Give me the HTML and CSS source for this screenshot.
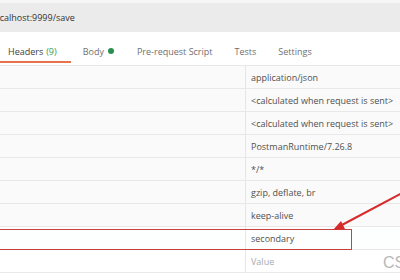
FILE: index.html
```html
<!DOCTYPE html>
<html lang="en">
<head>
<meta charset="UTF-8">
<meta name="viewport" content="width=device-width, initial-scale=1.0">
<title>Headers</title>
<link rel="stylesheet" href="styles.css">
</head>
<body>
<div class="page">
    <div class="url-bar">
        <div class="url-input"><span class="url-text">localhost:9999/save</span></div>
    </div>
    <div class="tabs">
        <div class="tab active">Headers <span class="count">(9)</span></div>
        <div class="tab body-tab">Body <span class="dot"></span></div>
        <div class="tab">Pre-request Script</div>
        <div class="tab">Tests</div>
        <div class="tab">Settings</div>
    </div>
    <div class="table">
        <div class="row auto"><div class="key"></div><div class="value">application/json</div></div>
        <div class="row auto"><div class="key"></div><div class="value">&lt;calculated when request is sent&gt;</div></div>
        <div class="row auto"><div class="key"></div><div class="value">&lt;calculated when request is sent&gt;</div></div>
        <div class="row auto"><div class="key"></div><div class="value">PostmanRuntime/7.26.8</div></div>
        <div class="row auto"><div class="key"></div><div class="value">*/*</div></div>
        <div class="row auto"><div class="key"></div><div class="value">gzip, deflate, br</div></div>
        <div class="row auto"><div class="key"></div><div class="value">keep-alive</div></div>
        <div class="row custom"><div class="key"></div><div class="value">secondary</div></div>
        <div class="row"><div class="key"></div><div class="value placeholder">Value</div></div>
    </div>

    <!-- annotations drawn over the screenshot -->
    <div class="mark-box"></div>
    <svg class="arrow" width="400" height="280" viewBox="0 0 400 280">
        <line x1="402" y1="193" x2="340" y2="226" stroke="#d62b2b" stroke-width="2"/>
        <polygon points="333,230 341,221 345,229" fill="#d62b2b"/>
    </svg>
    <div class="watermark">CSDN</div>
</div>
</body>
</html>
```

FILE: styles.css
```css
body {
    margin: 0;
    padding: 0;
    font-family: "Open Sans", Arial, sans-serif;
    font-size: 9px;
    color: #505050;
}
.page {
    position: relative;
    width: 400px;
    height: 280px;
    overflow: hidden;
    background-color: #fff;
}
.url-bar {
    padding-top: 3px;
    background-color: #f6f6f6;
}
.url-input {
    height: 29px;
    background-color: #ebebeb;
    display: flex;
    align-items: center;
    overflow: hidden;
}
.url-text {
    margin-left: -8px;
    color: #333;
}
.tabs {
    height: 33px;
    display: flex;
    align-items: stretch;
    border-bottom: 1px solid #e8e8e8;
}
.tab {
    display: flex;
    align-items: center;
    padding: 9px 11px 0 11px;
    color: #707070;
    border-bottom: 2px solid transparent;
    margin-bottom: 2px;
}
.tab.active {
    padding-left: 8px;
    padding-right: 14px;
    color: #404040;
    border-bottom-color: #e8734a;
}
.body-tab {
    padding-left: 12px;
    padding-right: 12px;
}
.count {
    color: #2f9e57;
    margin-left: 3px;
}
.dot {
    display: inline-block;
    width: 6px;
    height: 6px;
    border-radius: 50%;
    background-color: #2b8d4f;
    margin-left: 4px;
}
.row {
    display: flex;
    height: 22px;
    border-bottom: 1px solid #e8e8e8;
}
.row.auto {
    background-color: #fafafa;
}
.row.custom {
    background-color: #fdffff;
}
.key {
    width: 245px;
    border-right: 1px solid #e6e6e6;
}
.value {
    flex: 1;
    display: flex;
    align-items: center;
    padding-left: 5px;
    white-space: nowrap;
}
.placeholder {
    color: #aaa;
}
.mark-box {
    position: absolute;
    left: -2px;
    top: 229px;
    width: 352px;
    height: 19px;
    border: 1px solid #c84040;
}
.arrow {
    position: absolute;
    left: 0;
    top: 0;
}
.watermark {
    position: absolute;
    left: 383px;
    top: 254px;
    font-family: "Liberation Sans", Arial, sans-serif;
    font-size: 16px;
    color: #b8b8b8;
}
```
